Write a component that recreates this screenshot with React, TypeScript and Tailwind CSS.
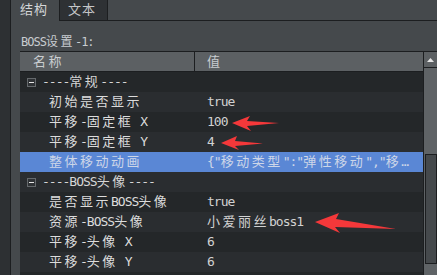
import React from "react";

type Row =
  | { kind: "group"; label: string }
  | { kind: "prop"; name: string; value: string };

const rows: Row[] = [
  { kind: "group", label: "----常规----" },
  { kind: "prop", name: "初始是否显示", value: "true" },
  { kind: "prop", name: "平移-固定框 X", value: "100" },
  { kind: "prop", name: "平移-固定框 Y", value: "4" },
  { kind: "prop", name: "整体移动动画", value: '{"移动类型":"弹性移动","移…' },
  { kind: "group", label: "----BOSS头像----" },
  { kind: "prop", name: "是否显示BOSS头像", value: "true" },
  { kind: "prop", name: "资源-BOSS头像", value: "小爱丽丝boss1" },
  { kind: "prop", name: "平移-头像 X", value: "6" },
  { kind: "prop", name: "平移-头像 Y", value: "6" },
  { kind: "prop", name: "", value: "" },
];

const SELECTED = 4;

// CJK runs get a bit of extra spacing, latin runs are squeezed, like the original font
const CJK = /([\u3000-\u9fff\uff00-\uffef]+)/;

function T({ s }: { s: string }) {
  return (
    <>
      {s.split(CJK).map((p, i) =>
        p === "" ? null : i % 2 ? (
          <span key={i} className="tracking-[2.5px]">
            {p}
          </span>
        ) : (
          <span key={i} className="tracking-[-1px]">
            {p}
          </span>
        )
      )}
    </>
  );
}

function Arrows() {
  return (
    <svg className="pointer-events-none absolute left-0 top-0" width="437" height="275">
      <polygon points="232,123 250,116 247,121 279,123 247,126 251,131" fill="#f4383a" />
      <polygon points="221,143 237,136 235,141 263,143.5 235,146 239,150" fill="#f4383a" />
      <polygon points="315,222 339,213 336,219 396,229 335,227 340,233" fill="#f4383a" />
    </svg>
  );
}

export default function App() {
  return (
    <div className="relative flex h-[275px] w-[437px] overflow-hidden bg-[#45494c] font-['DejaVu_Sans_Mono','Noto_Sans_CJK_SC',monospace] text-[13px]">
      <div className="w-[11px] shrink-0 border-r border-[#1c1e20] bg-[#2d3033]" />

      <div className="flex min-w-0 flex-1 flex-col">
        {/* tabs */}
        <div className="flex h-[21px] shrink-0">
          <div className="w-[48px] pl-[9px] leading-[20px] tracking-[1px] text-[#d4d6d8]">结构</div>
          <div className="w-[49px] border-x border-b border-[#1c1e20] bg-[#2e3134] pl-[8px] leading-[19px] tracking-[1px] text-[#c4c6c8]">
            文本
          </div>
          <div className="flex-1 border-b border-[#1c1e20]" />
        </div>

        <div className="h-[30px] shrink-0 pl-[10px] pt-[13px] text-[12px] leading-[17px] text-[#c8ccd0]">
          <T s="BOSS设置-1:" />
        </div>

        {/* table + scrollbar */}
        <div className="ml-[9px] flex flex-1">
          <div className="flex w-[404px] shrink-0 flex-col border-r border-[#1c1e20]">
            <div className="flex h-[21px] shrink-0 border-y border-[#1c1e20] bg-[#5c6063] leading-[19px] text-[#c9cdd0]">
              <div className="w-[175px] border-r border-[#1c1e20] pl-[13px]">
                <T s="名称" />
              </div>
              <div className="flex-1 pl-[12px]">
                <T s="值" />
              </div>
            </div>

            {rows.map((r, i) => {
              const sel = i === SELECTED;
              const bg = sel ? "bg-[#5a87d5]" : i % 2 ? "bg-[#2a2d30]" : "bg-[#242729]";
              if (r.kind === "group") {
                return (
                  <div key={i} className={`flex h-[20px] shrink-0 items-center pl-[7px] ${bg}`}>
                    <div className="flex h-[9px] w-[9px] items-center justify-center border border-[#65696c] bg-[#2f3235]">
                      <div className="h-px w-[5px] bg-[#e6e6e6]" />
                    </div>
                    <div className="ml-[6px] leading-[20px] text-[#d6d6d6]">
                      <T s={r.label} />
                    </div>
                  </div>
                );
              }
              return (
                <div key={i} className={`flex h-[20px] shrink-0 leading-[20px] ${bg}`}>
                  <div className={`w-[174px] shrink-0 pl-[29px] ${sel ? "text-[#cdd6e8]" : "text-[#dcdcdc]"}`}>
                    <T s={r.name} />
                  </div>
                  <div
                    className={`min-w-0 flex-1 overflow-hidden whitespace-nowrap pl-[13px] ${
                      sel ? "text-[#cdd6e8]" : "text-[#d2d2d2]"
                    }`}
                  >
                    <T s={r.value} />
                  </div>
                </div>
              );
            })}
          </div>

          <div className="flex flex-1 flex-col bg-[#5f6366]">
            <div className="flex h-[17px] shrink-0 items-center justify-center border-y border-[#1c1e20] bg-[#5c6063] pr-[1px]">
              <svg width="7" height="4" viewBox="0 0 7 4">
                <polygon points="0,4 3.5,0 7,4" fill="#e4e4e4" />
              </svg>
            </div>
            <div className="ml-[1px] mt-[86px] h-[110px] border border-[#1c1e20] bg-[#45494c]" />
          </div>
        </div>
      </div>

      <Arrows />
    </div>
  );
}
